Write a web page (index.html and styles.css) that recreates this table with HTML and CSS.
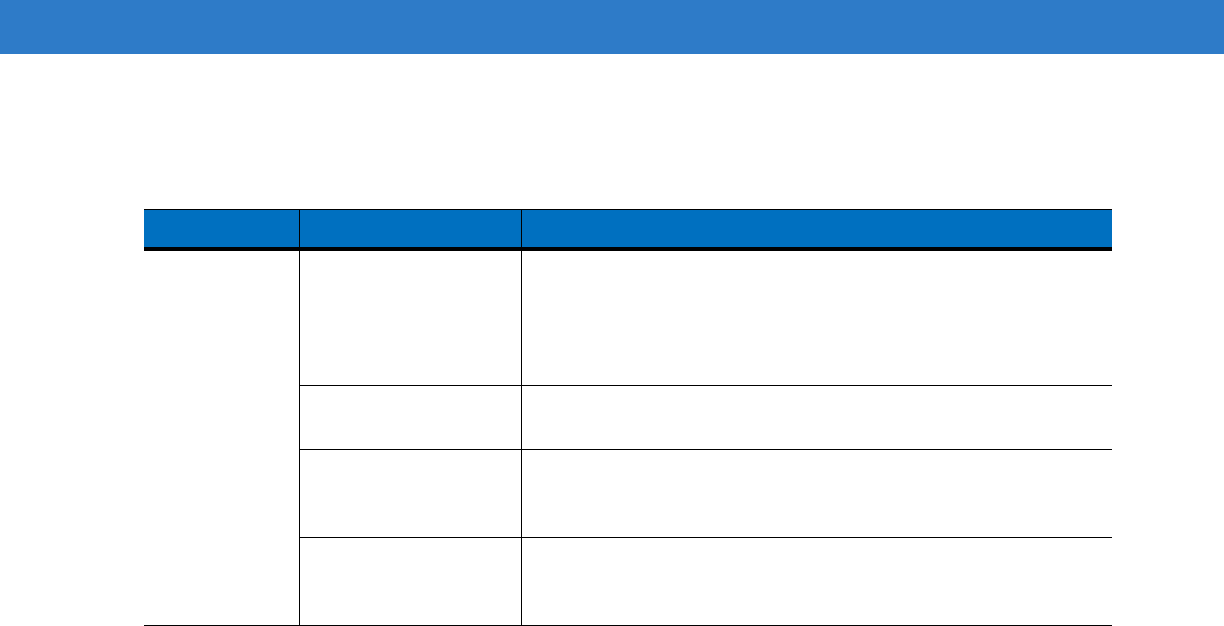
FILE: index.html
```html
<!DOCTYPE html>
<html lang="en">
<head>
<meta charset="utf-8">
<title>Table</title>
<link rel="stylesheet" href="styles.css">
</head>
<body>
<header class="topbar"></header>
<main class="content">
  <div class="grid-table" role="table">
    <div class="th" role="columnheader"></div>
    <div class="th sep" role="columnheader"></div>
    <div class="th sep" role="columnheader"></div>

    <div class="td first" role="cell"></div>
    <div class="td sep row r1" role="cell"></div>
    <div class="td sep row r1" role="cell"></div>
    <div class="td sep row r2" role="cell"></div>
    <div class="td sep row r2" role="cell"></div>
    <div class="td sep row r3" role="cell"></div>
    <div class="td sep row r3" role="cell"></div>
    <div class="td sep row r4" role="cell"></div>
    <div class="td sep row r4" role="cell"></div>
  </div>
</main>
</body>
</html>
```

FILE: styles.css
```css
* {
  box-sizing: border-box;
}

html, body {
  margin: 0;
  padding: 0;
  background: #ffffff;
  font-family: "Liberation Sans", Arial, sans-serif;
}

.topbar {
  height: 54px;
  background: #2e7bc8;
}

.content {
  padding: 155px 0 0 144px;
}

.grid-table {
  display: grid;
  grid-template-columns: 155px 222px 591px;
  grid-template-rows: 42px 135px 64px 88px 88px;
  width: 968px;
}

.th {
  background: #0070c0;
  border-top: 1px solid #000;
  border-bottom: 4px solid #000;
}

.sep {
  border-left: 1px solid #000;
}

.td.first {
  grid-column: 1;
  grid-row: 2 / span 4;
  border-bottom: 1px solid #000;
}

.td.row {
  border-bottom: 1px solid #000;
}
```
